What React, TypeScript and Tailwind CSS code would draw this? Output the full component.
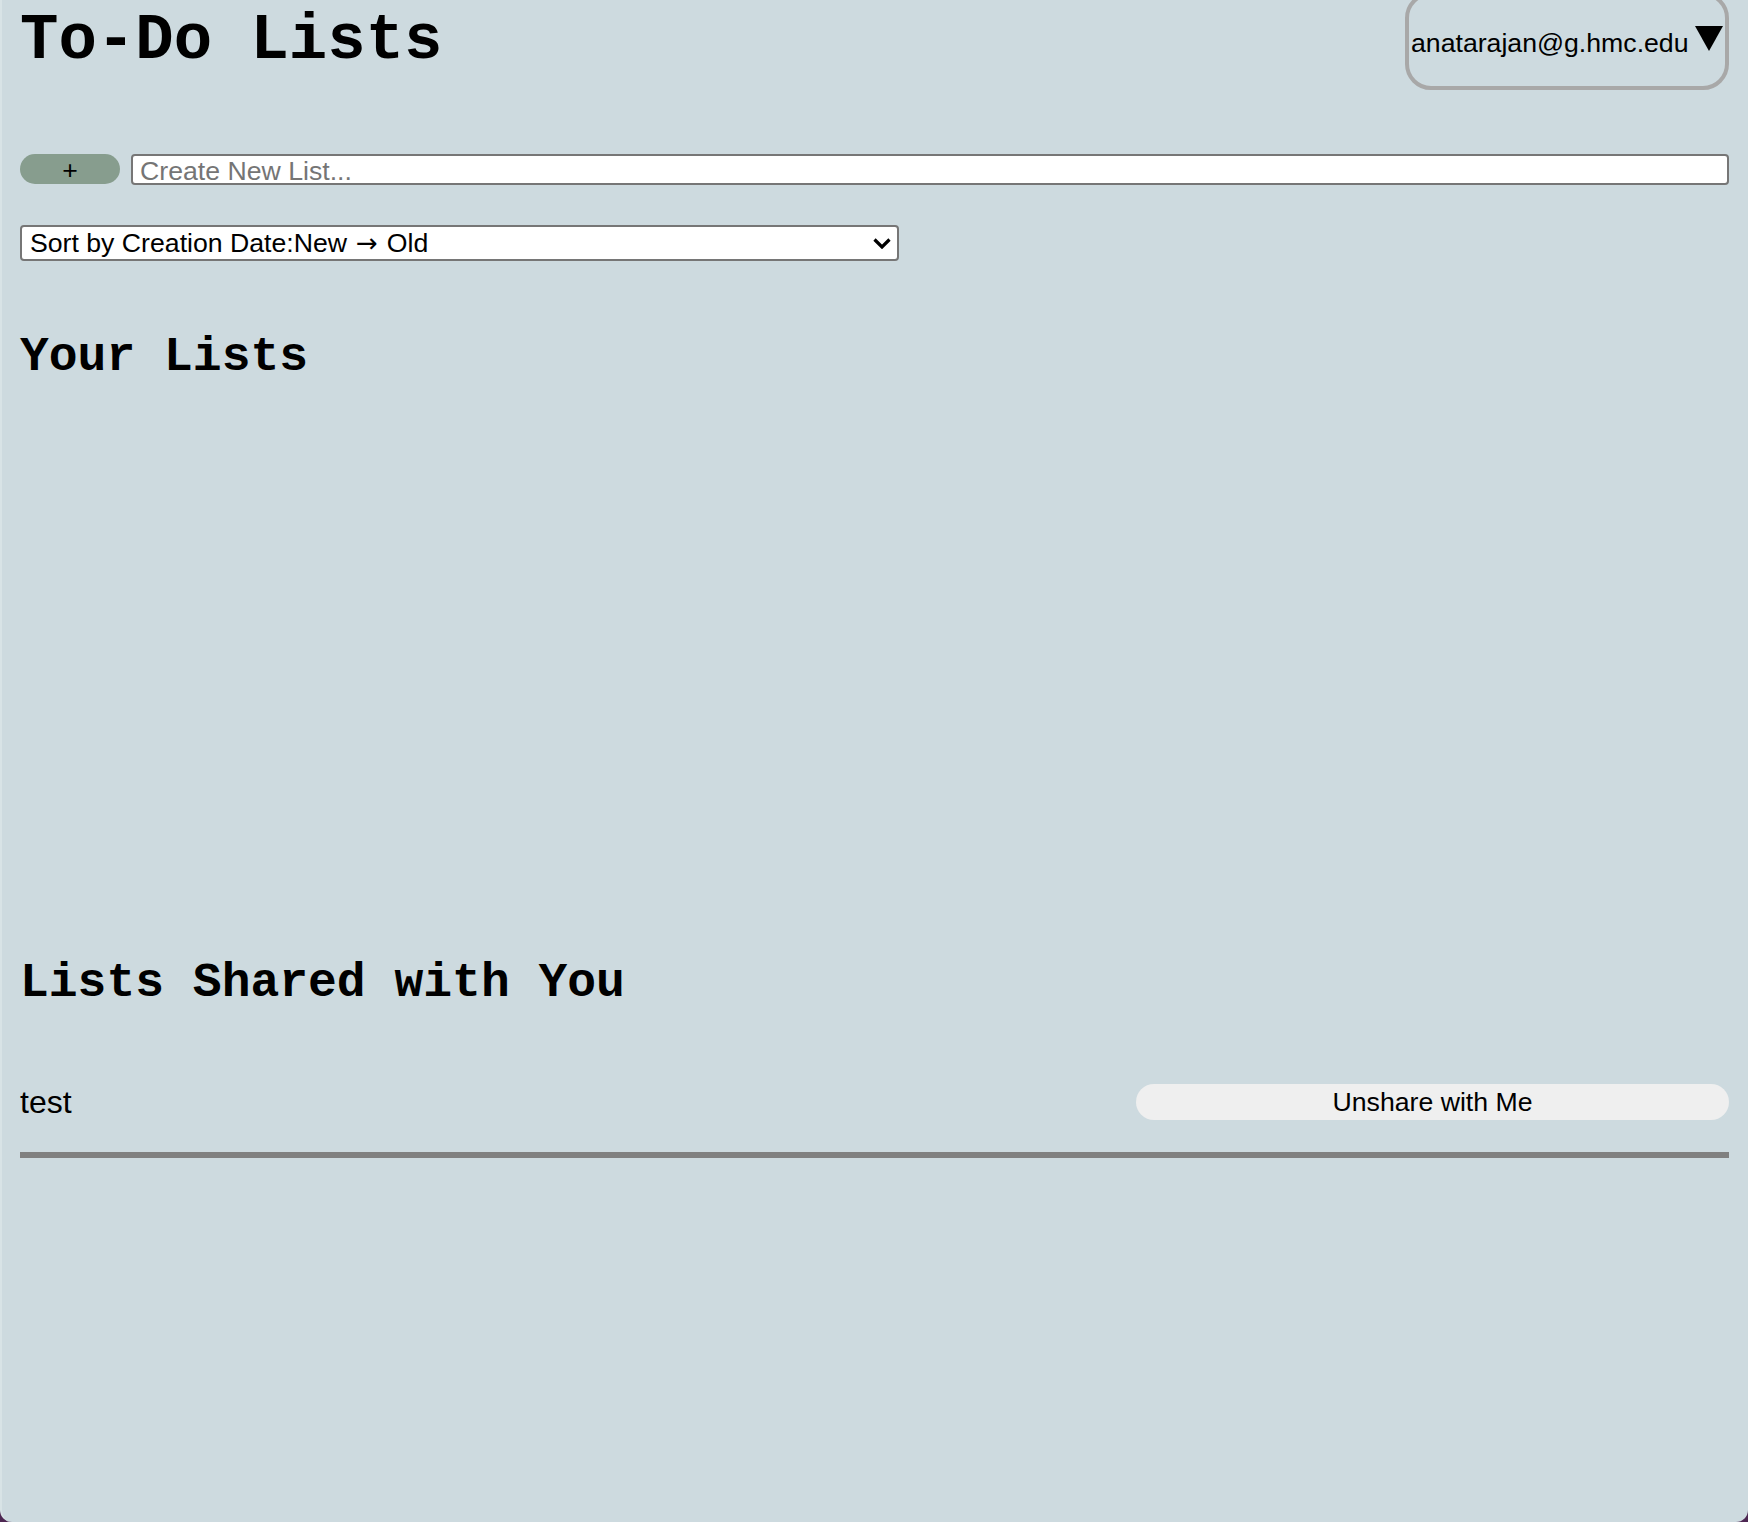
import React from "react";

export default function App() {
  return (
    <div className="min-h-screen bg-[#4d2752]" style={{ fontFamily: '"Liberation Sans", Arial, sans-serif' }}>
      <div className="min-h-screen bg-[#cddadf] border-l-[2px] border-[#d8e3e6] rounded-b-[12px] pl-[18px] pr-[19px] text-black">
        {/* Header */}
        <div className="flex items-start justify-between">
          <h1
            className="mt-[9px] text-[64px] leading-[64px] font-bold"
            style={{ fontFamily: '"Liberation Mono", "Courier New", monospace' }}
          >
            To-Do Lists
          </h1>
          <button className="mt-[-8px] h-[98px] w-[324px] flex items-center justify-between px-[2px] border-[4px] border-[#a8a8a8] rounded-[26px] bg-transparent text-[26.67px] leading-none text-black">
            <span className="mt-[4px]">anatarajan@g.hmc.edu</span>
            <svg width="28" height="25" viewBox="0 0 28 25" className="mb-[6px]">
              <polygon points="0,0 28,0 14,25" fill="#000" />
            </svg>
          </button>
        </div>

        {/* Create row */}
        <div className="mt-[64px] flex items-start gap-[11px]">
          <button className="h-[30px] w-[100px] rounded-full bg-[#879d8e] text-[26.67px] leading-none text-black flex items-center justify-center pt-[2px]">
            +
          </button>
          <input
            className="flex-1 h-[31px] border-[2px] border-[#767676] rounded-[4px] bg-white pl-[7px] pt-[3px] pb-0 text-[26.67px] leading-none text-black placeholder:text-[#757575] outline-none"
            placeholder="Create New List..."
          />
        </div>

        {/* Sort select */}
        <button
          type="button"
          className="mt-[40px] w-[879px] h-[36px] flex items-center justify-between border-[2px] border-[#767676] rounded-[4px] bg-white pl-[8px] pr-[6px] text-[26.67px] leading-none text-black"
        >
          <span className="flex items-center">
            Sort by Creation Date:New
            <span className="mx-[9px]" style={{ fontFamily: '"DejaVu Sans", sans-serif', fontSize: "26px" }}>
              →
            </span>
            Old
          </span>
          <svg width="18" height="11" viewBox="0 0 18 11">
            <polyline points="1.5,1.5 9,9 16.5,1.5" fill="none" stroke="#000" strokeWidth="3.2" />
          </svg>
        </button>

        {/* Your Lists */}
        <h2
          className="mt-[72px] text-[48px] leading-[48px] font-bold"
          style={{ fontFamily: '"Liberation Mono", "Courier New", monospace' }}
        >
          Your Lists
        </h2>

        {/* Shared */}
        <h2
          className="mt-[578px] text-[48px] leading-[48px] font-bold"
          style={{ fontFamily: '"Liberation Mono", "Courier New", monospace' }}
        >
          Lists Shared with You
        </h2>

        <div className="mt-[77px] flex items-center justify-between">
          <span className="text-[32px] leading-[36px]">test</span>
          <button className="h-[36px] w-[593px] rounded-[18px] bg-[#efefef] text-[26.67px] leading-none text-black">
            Unshare with Me
          </button>
        </div>

        <div className="mt-[32px] h-[6px] bg-[#808080]" />
      </div>
    </div>
  );
}
